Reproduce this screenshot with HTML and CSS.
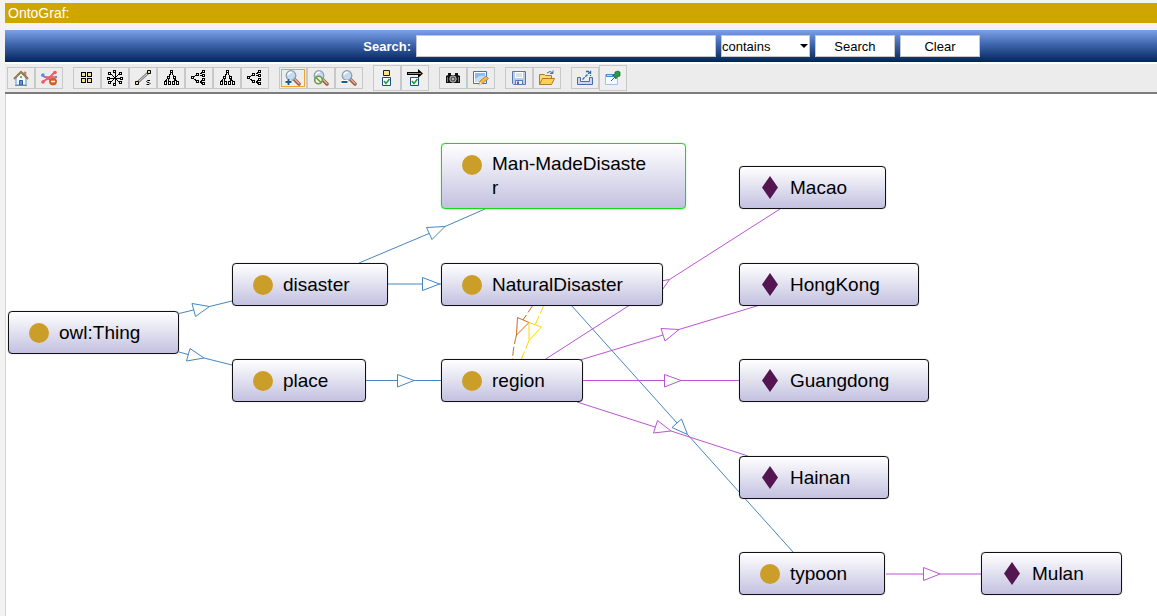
FILE: index.html
```html
<!DOCTYPE html>
<html lang="en">
<head>
<meta charset="utf-8">
<title>OntoGraf</title>
<link rel="stylesheet" href="styles.css">
</head>
<body>
<svg class="defs" aria-hidden="true">
  <defs>
    <g id="tree-down">
      <path class="ln" d="M8 3L5 8M9 3l3 5M4 9L2 12M5 9l1 3M12 9l-1 3M12 9l2 3"/>
      <path class="sq" d="M7.500 .5h2v2h-2zM4.500 6.500h2v2h-2zM10.500 6.500h2v2h-2zM1.500 11.500h2v3h-2zM5.500 11.500h2v3h-2zM9.500 11.500h2v3h-2zM13.500 11.500h2v3h-2z"/>
    </g>
    <g id="tree-right">
      <path class="ln" d="M3 7l4-3M3 9l4 3M9 4l3-2M9 5l3 1M9 12l3-2M9 12l3 2"/>
      <path class="sq" d="M.5 6.500h2v2h-2zM5.500 3.500h2v2h-2zM5.500 10.500h2v2h-2zM11.500 .5h2v2h-2zM11.500 4.500h2v2h-2zM11.500 8.500h2v2h-2zM11.500 12.500h2v2h-2z"/>
    </g>
    <g id="lens">
      <path d="M9.500 9.500l4.500 4.500" stroke="#9a5a3c" stroke-width="3.500" stroke-linecap="round"/>
      <path d="M10 9.500l4 4" stroke="#dcb292" stroke-width="1.500" stroke-linecap="round"/>
      <circle cx="6" cy="5.500" r="4.800" fill="#c3daf0" stroke="#8b9bac" stroke-width="1.200"/>
      <path d="M3 5a3 3 0 0 1 4-2.500" fill="none" stroke="#fff" stroke-width="1.500"/>
    </g>
    <g id="checked">
      <path d="M3.500 8.500h8v8h-8z" fill="#fff" stroke="#1c4f80"/>
      <path d="M5 12l2 2.500 3.500-4.500" fill="none" stroke="#20a030" stroke-width="1.600"/>
    </g>
  </defs>
</svg>
<div class="app">
  <h1 class="title">OntoGraf:</h1>
  <form class="search">
    <label class="search-label" for="query">Search:</label>
    <input class="query" id="query" type="text">
    <span class="mode-box">
      <select class="mode" aria-label="Match mode"><option>contains</option></select>
    </span>
    <button class="action" type="button">Search</button>
    <button class="action" type="button">Clear</button>
  </form>

  <div class="toolbar" role="toolbar" aria-label="Graph tools">
    <div class="group">
      <button class="tool" type="button" aria-label="Home"><svg class="icon" viewBox="0 0 16 16">
        <path d="M3 8v7h10V8L8 3z" fill="#f5f8ff" stroke="#6d8fd0"/>
        <path d="M11 2h2v4h-2z" fill="#c9a37a" stroke="#8d6b4a" stroke-width=".5"/>
        <path d="M1 9l7-7 7 7" fill="none" stroke="#917046" stroke-width="2.200"/>
        <path d="M2 8.500l6-6 6 6" fill="none" stroke="#e2cda7" stroke-width=".7" stroke-dasharray="1 1"/>
        <path d="M6.500 10.500h3V15h-3z" fill="#6b94cd" stroke="#345b99"/>
        <path d="M7 6h2v2H7z" fill="#4fc15c"/><path d="M2 15.500h12" stroke="#5aa652"/>
      </svg></button>
      <button class="tool" type="button" aria-label="Remove relations"><svg class="icon" viewBox="0 0 16 16">
        <path d="M0 5l14 7" stroke="#5c8ee8" stroke-width="1.600"/>
        <path d="M1 12l7-4 6-6" fill="none" stroke="#ee5a66" stroke-width="1.800"/>
        <path d="M3 7l12 0" stroke="#ee5a66" stroke-width="1.500"/>
        <circle cx="2" cy="5" r="1.700" fill="#5c8ee8"/><circle cx="2" cy="12" r="1.800" fill="#ee5a66"/>
        <circle cx="14" cy="2.500" r="1.800" fill="#ee5a66"/><circle cx="15" cy="7" r="1.200" fill="#5c8ee8"/>
        <circle cx="12" cy="11.500" r="3.600" fill="#e2601a" stroke="#b4400d" stroke-width=".6"/>
        <path d="M10 11.500h4" stroke="#fff" stroke-width="1.500"/>
      </svg></button>
    </div>
    <div class="group">
      <button class="tool" type="button" aria-label="Grid layout"><svg class="icon crisp" viewBox="0 0 16 16">
        <path class="sq-tan" d="M2.500 2.500h4v4h-4zM8.500 2.500h4v4h-4zM2.500 8.500h4v4h-4zM8.500 8.500h4v4h-4z"/>
      </svg></button>
      <button class="tool" type="button" aria-label="Radial layout"><svg class="icon crisp" viewBox="0 0 16 16">
        <path class="ln" d="M8 3v10M3 8h10M4 4l8 8M12 4l-8 8"/>
        <path class="sq" d="M6.500 .5h2v2h-2zM6.500 13.500h2v2h-2zM.5 7.500h2v2h-2zM13.500 7.500h2v2h-2zM1.500 2.500h2v2h-2zM12.500 2.500h2v2h-2zM1.500 11.500h2v2h-2zM12.500 11.500h2v2h-2z"/>
      </svg></button>
      <button class="tool" type="button" aria-label="Spring layout"><svg class="icon" viewBox="0 0 16 16">
        <path d="M3 12L13 3" stroke="#777" stroke-width="2.600"/><path d="M3 12L13 3" stroke="#eee" stroke-width=".9"/>
        <path class="sq-tan" d="M12.500 .5h3v3h-3zM.5 11.500h3v3h-3z"/>
        <path d="M15 10.500h-2.500l-.8 1 .8 1h1.500l1 1-1 1h-2.500" fill="none" stroke="#000"/>
      </svg></button>
      <button class="tool" type="button" aria-label="Vertical tree"><svg class="icon crisp" viewBox="0 0 16 16"><use href="#tree-down"/></svg></button>
      <button class="tool" type="button" aria-label="Horizontal tree"><svg class="icon crisp" viewBox="0 0 16 16"><use href="#tree-right"/></svg></button>
      <button class="tool" type="button" aria-label="Vertical directed"><svg class="icon crisp" viewBox="0 0 16 16"><use href="#tree-down"/></svg></button>
      <button class="tool" type="button" aria-label="Horizontal directed"><svg class="icon crisp" viewBox="0 0 16 16"><use href="#tree-right"/></svg></button>
    </div>
    <div class="group">
      <button class="tool tool-on" type="button" aria-label="Zoom in"><svg class="icon" viewBox="0 0 16 16">
        <use href="#lens"/><path d="M.5 12h6M3.500 9v6" stroke="#fff" stroke-width="3.500"/><path d="M.5 12h6M3.500 9v6" stroke="#1f5b88" stroke-width="2"/>
      </svg></button>
      <button class="tool" type="button" aria-label="No zoom"><svg class="icon" viewBox="0 0 16 16">
        <use href="#lens"/><circle cx="5.500" cy="10" r="3.800" fill="#eef3e6" stroke="#6f9a4b" stroke-width="1.600"/><path d="M3 7.500l5 5" stroke="#6f9a4b" stroke-width="1.600"/>
      </svg></button>
      <button class="tool" type="button" aria-label="Zoom out"><svg class="icon" viewBox="0 0 16 16">
        <use href="#lens"/><path d="M0 12h7" stroke="#fff" stroke-width="4"/><path d="M.5 12h6" stroke="#1f5b88" stroke-width="2"/>
      </svg></button>
    </div>
    <div class="group">
      <button class="tool tool-tall" type="button" aria-label="Node types"><svg class="icon icon-tall" viewBox="0 0 16 18">
        <path d="M4.500 1.500h6v5h-6z" fill="#f0e68c" stroke="#222"/><use href="#checked"/>
      </svg></button>
      <button class="tool tool-tall" type="button" aria-label="Arc types"><svg class="icon icon-tall" viewBox="0 0 16 18">
        <path d="M0 4.500h13" stroke="#000" stroke-width="3"/><path d="M11 0l5 4.500-5 4.500z" fill="#000"/><path d="M1 4.500h13" stroke="#25a5ea"/><use href="#checked"/>
      </svg></button>
    </div>
    <div class="group">
      <button class="tool" type="button" aria-label="Save image"><svg class="icon" viewBox="0 0 16 16">
        <path d="M3 3h3v2h4V3h3v2l2 1v7H1V6l2-1z" fill="#111"/>
        <circle cx="8" cy="9" r="3.200" fill="#555" stroke="#bbb"/><circle cx="8" cy="9" r="1.300" fill="#a8b9b0"/><path d="M2.500 7v5M13.500 7v5" stroke="#777"/>
      </svg></button>
      <button class="tool" type="button" aria-label="Edit as dot"><svg class="icon" viewBox="0 0 16 16">
        <path d="M.5 1.500h13v12H.5z" fill="#fff" stroke="#4474b8"/><path d="M2 3h10v9H2z" fill="#8dbbea"/><path d="M2 9q5-5 10-3v6H2z" fill="#c5def5"/>
        <path d="M6 15l1-4 6-5 2.500 2.500-6 5z" fill="#f2b84b" stroke="#a86c1e" stroke-width=".7"/><path d="M6 15l1-3 2 2z" fill="#fff1d0"/>
      </svg></button>
    </div>
    <div class="group">
      <button class="tool" type="button" aria-label="Save graph"><svg class="icon" viewBox="0 0 16 16">
        <path d="M1.500 1.500h13v13h-12l-1-1z" fill="#b9cce8" stroke="#5679ab"/><path d="M4 2h8v6H4z" fill="#fff"/><path d="M5 4h6M5 6h6" stroke="#b6c3d5"/>
        <path d="M4.500 10.500h7v4h-7z" fill="#e9eff8" stroke="#5679ab"/><path d="M6 11.500h2V14H6z" fill="#47689a"/>
      </svg></button>
      <button class="tool" type="button" aria-label="Open graph"><svg class="icon" viewBox="0 0 16 16">
        <path d="M.5 14V4.500h5l1 1h6V14z" fill="#f8d97f" stroke="#b47a1b"/><path d="M.5 14.500l3-6h12l-3 6z" fill="#ffcf57" stroke="#b47a1b"/>
        <path d="M8 3q3-3 6 0M14 .5v3h-3" fill="none" stroke="#4c6c9b"/>
      </svg></button>
    </div>
    <div class="group">
      <button class="tool" type="button" aria-label="Export"><svg class="icon" viewBox="0 0 16 16">
        <path d="M.5 7.500h3v4h9v-4h3v7H.5z" fill="#c4d8f2" stroke="#4a6da5"/><path d="M5.500 9.500L13 2M9 1.500h4.500V6" fill="none" stroke="#2e67a8" stroke-width="1.300" stroke-dasharray="3 1"/>
      </svg></button>
      <button class="tool tool-tall" type="button" aria-label="Pin tooltips"><svg class="icon" viewBox="0 0 16 16">
        <path d="M.5 4.500h12v10H.5z" fill="#f5fbff" stroke="#9cc3e3"/><path d="M1 4h11v3H1z" fill="#4d8edb"/><path d="M2 5.500h5" stroke="#b9dcff"/>
        <path d="M6 11l4-4" stroke="#555"/><path d="M8 5l3 4 1-2 3-1V2l-2-1-3 1v2z" fill="#2d9b45" stroke="#17672a" stroke-width=".7"/>
      </svg></button>
    </div>
  </div>

  <main class="canvas">
    <svg class="edges" width="1151" height="522" viewBox="6 94 1151 522" aria-hidden="true">
      <g class="subclass">
        <path d="M179 313.500L193.500 310M209.500 306.500L232 301M192 303.500L209.500 306.500L195.500 316.500z"/>
        <path d="M179 352L188 354.500M204 358L232 365M190 348.500L204 358L186.500 361z"/>
        <path d="M359 263L429 233.500M445 226.500L485 209M426.500 227.500L445 226.500L432 239.500z"/>
        <path d="M388 284H422M439 284H441M422.500 277.500L439.500 284L422.500 290.500z"/>
        <path d="M366 380.500H397M414 380.500H441M397.500 374.500L414 380.500L397.500 387z"/>
        <path d="M571 305L677 423M687.500 434.500L793 552M681.500 419L687.500 434.500L672 427.500z"/>
      </g>
      <g class="individual">
        <path d="M545 359.500L655.500 288.500M669.500 279.500L780 209M652 282.500L669.500 279.500L659 294.500z"/>
        <path d="M580 360L663 335M679 329.500L760 305M661 328.500L679 329.500L665 341z"/>
        <path d="M583 380.500H664M681 380.500H739M664.500 374.500L681 380.500L664.500 387z"/>
        <path d="M577 402L655 427M671 431L748 456M657.500 420.500L671 431L653.500 433z"/>
        <path d="M886 574H923M940 574H981M923.500 567.500L940 574L923.500 580.500z"/>
      </g>
      <g class="domain">
        <path class="dashed" d="M533 305L523 320M516.500 335Q513 348 512.500 360"/>
        <path d="M517.500 317.500L529 322.500L516.500 335z"/>
      </g>
      <g class="range">
        <path class="dashed" d="M544 305L535 325M529 340.500L521 360"/>
        <path d="M529 322.500L541.500 327L529 340.500z"/>
      </g>
    </svg>
    <div class="node thing"><span class="dot"></span><span class="name">owl:Thing</span></div>
    <div class="node disaster"><span class="dot"></span><span class="name">disaster</span></div>
    <div class="node place"><span class="dot"></span><span class="name">place</span></div>
    <div class="node man-made"><span class="dot"></span><span class="name">Man-MadeDisaster</span></div>
    <div class="node natural"><span class="dot"></span><span class="name">NaturalDisaster</span></div>
    <div class="node region"><span class="dot"></span><span class="name">region</span></div>
    <div class="node macao"><span class="gem"></span><span class="name">Macao</span></div>
    <div class="node hongkong"><span class="gem"></span><span class="name">HongKong</span></div>
    <div class="node guangdong"><span class="gem"></span><span class="name">Guangdong</span></div>
    <div class="node hainan"><span class="gem"></span><span class="name">Hainan</span></div>
    <div class="node typoon"><span class="dot"></span><span class="name">typoon</span></div>
    <div class="node mulan"><span class="gem"></span><span class="name">Mulan</span></div>
  </main>
</div>
</body>
</html>
```
FILE: styles.css
```css
* { box-sizing: border-box; }
body {
  margin: 0;
  background: #f3f3f3;
  font-family: "Liberation Sans", Arial, sans-serif;
  color: #000;
}
.defs { position: absolute; width: 0; height: 0; }
.app {
  display: flex;
  flex-direction: column;
  min-height: 100vh;
  padding: 3px 0 0 5px;
}
.title {
  margin: 0 0 7px;
  padding: 0 3px;
  background: #cfa500;
  color: #fff;
  font-size: 14px;
  font-weight: 400;
  line-height: 20px;
}

.search {
  display: flex;
  align-items: center;
  gap: 5px;
  padding: 5px 5px 5px 31.1%;
  background: linear-gradient(#7ba2e7, #3f66ad 45%, #02245c);
  font-size: 13px;
}
.search-label { color: #fff; font-weight: 700; }
.query, .mode, .action {
  height: 22px;
  margin: 0;
  border: 1px solid #c8c8c8;
  border-radius: 0;
  background: #fff;
  color: #000;
  font: inherit;
}
.query { width: 300px; padding: 0 4px; }
.mode-box { position: relative; display: flex; }
.mode { width: 89px; padding: 0; appearance: none; }
.mode-box::after {
  content: "";
  position: absolute;
  top: 9px;
  right: 2px;
  border: 4px solid transparent;
  border-top-color: #000;
  border-bottom: 0;
  pointer-events: none;
}
.action { width: 80px; padding: 0; }

.toolbar {
  display: flex;
  align-items: center;
  gap: 10px;
  height: 32px;
  padding-left: 2px;
  border-top: 2px solid #fff;
  border-bottom: 2px solid #7c7c7c;
  background: #ececec;
}
.group { display: flex; align-items: center; }
.tool {
  display: grid;
  place-items: center;
  width: 28px;
  height: 22px;
  padding: 0;
  border: 1px solid #c8c8c8;
  border-radius: 0;
  background: #ededed;
}
.tool-tall { height: 26px; background: #efefef; }
.tool-on { outline: 1px solid #f0a42c; outline-offset: -3px; }
.icon { display: block; width: 16px; height: 16px; }
.icon-tall { height: 18px; }
.crisp { shape-rendering: crispEdges; }
.ln { fill: none; stroke: #000; }
.sq { fill: #fff; stroke: #000; }
.sq-tan { fill: #f0e68c; stroke: #000; }

.canvas {
  position: relative;
  flex: 1;
  min-height: 522px;
  overflow: hidden;
  border-left: 1px solid #d4d4d4;
  background: #fff;
}
.edges { position: absolute; top: 0; left: 0; fill: #fff; }
.subclass { stroke: #4686be; }
.individual { stroke: #ba55d3; }
.domain { stroke: #d2691e; }
.range { stroke: #ffd700; }
.dashed { fill: none; stroke-dasharray: 9 3; }

.node {
  position: absolute;
  display: flex;
  align-items: center;
  gap: 10px;
  min-height: 43px;
  padding: 8px 30px 8px 20px;
  border: 1px solid #111;
  border-radius: 4px;
  background: linear-gradient(#fff, #c3c1e0);
  box-shadow: 0 0 1px #777;
  font-size: 19px;
  line-height: 24px;
}
.name { flex: 1; min-width: 0; overflow-wrap: anywhere; }
.dot, .gem { flex: none; width: 20px; height: 20px; }
.dot { border-radius: 50%; background: #cb9d29; }
.gem {
  height: 23px;
  background: #541650;
  clip-path: polygon(50% 0, 90% 50%, 50% 100%, 10% 50%);
}
.thing { left: 2px; top: 217px; width: 171px; }
.disaster { left: 226px; top: 169px; width: 156px; }
.place { left: 226px; top: 265px; width: 134px; }
.man-made {
  left: 435px;
  top: 49px;
  width: 245px;
  align-items: flex-start;
  padding-right: 36px;
  border-color: #14dc14;
  box-shadow: 0 0 1px #14dc14;
}
.man-made .name { word-break: break-all; }
.man-made .dot { margin-top: 3px; }
.natural { left: 435px; top: 169px; width: 222px; }
.region { left: 435px; top: 265px; width: 142px; }
.macao { left: 733px; top: 72px; width: 147px; }
.hongkong { left: 733px; top: 169px; width: 180px; }
.guangdong { left: 733px; top: 265px; width: 190px; }
.hainan { left: 733px; top: 362px; width: 150px; }
.typoon { left: 733px; top: 458px; width: 146px; }
.mulan { left: 975px; top: 458px; width: 141px; }
```
